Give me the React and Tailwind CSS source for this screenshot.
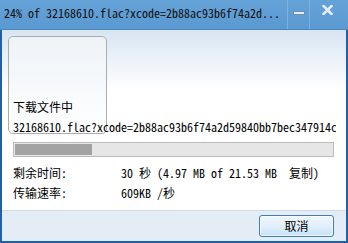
export default function App() {
  return (
    <div className="w-[348px] h-[243px] flex flex-col bg-[#1f60a8] font-['Noto_Sans_Mono_CJK_SC','Noto_Sans_CJK_SC',monospace] text-[12px] leading-[12px] text-black overflow-hidden">
      {/* Title bar */}
      <div className="h-[30px] shrink-0 flex items-stretch bg-[linear-gradient(to_bottom,#65a2d8,#5a99d1)] border-b border-[#4a86c0]">
        <div className="flex-1 pl-[4px] pt-[7px] whitespace-nowrap overflow-hidden text-[#111]">
          24% of 32168610.flac?xcode=2b88ac93b6f74a2d...
        </div>
        <div className="w-[22px] border-l border-[#7fb1de] flex justify-center pt-[11px]">
          <svg width="12" height="4" viewBox="0 0 12 4">
            <rect x="0.5" y="0.5" width="11" height="3" fill="#e4ecf4" stroke="#6f8fb0" strokeWidth="1" />
          </svg>
        </div>
        <div className="w-[36px] border-l border-[#7fb1de] flex justify-center pt-[5px]">
          <svg width="11" height="10" viewBox="0 0 11 10">
            <path d="M1.5 1 L9.5 9 M9.5 1 L1.5 9" stroke="#e6edf4" strokeWidth="2.6" strokeLinecap="square" />
          </svg>
        </div>
        <div className="w-[3px]" />
      </div>

      {/* Body */}
      <div className="flex-1 flex flex-col mx-[2px] mb-[2px]">
        <div className="flex-1 bg-[linear-gradient(to_bottom,#d8e5f2_0px,#ffffff_60px)] pl-[6px] pt-[6px]">
          {/* Thumbnail box */}
          <div className="w-[99px] h-[98px] rounded-[5px] border border-[#acacac] bg-[linear-gradient(to_bottom,#eef3f8,#ffffff)] flex flex-col justify-end pl-[4px]">
            <div className="mb-[8px] whitespace-nowrap">下载文件中</div>
            <div className="w-[323px] shrink-0 whitespace-nowrap overflow-hidden">
              32168610.flac?xcode=2b88ac93b6f74a2d59840bb7bec347914c92a
            </div>
          </div>

          {/* Progress bar */}
          <div className="ml-[5px] mt-[8px] w-[321px] h-[15px] border border-[#bcbcbc] bg-[#e6e6e6] p-[1px]">
            <div className="h-full w-[77px] bg-[#a3a3a3]" />
          </div>

          {/* Info rows */}
          <div className="mt-[6px] ml-[5px] flex flex-col leading-[20px]">
            <div className="flex whitespace-pre">
              <div className="w-[108px]">剩余时间:</div>
              <div>30 秒 (4.97 MB of 21.53 MB  复制)</div>
            </div>
            <div className="flex whitespace-pre">
              <div className="w-[108px]">传输速率:</div>
              <div>609KB /秒</div>
            </div>
          </div>
        </div>

        {/* Bottom panel */}
        <div className="h-[31px] shrink-0 border-t border-[#ccdaea] bg-[#e4ecf5] flex justify-end items-center pr-[12px]">
          <button className="w-[75px] h-[22px] rounded-[3px] border border-[#3c7fb1] bg-[linear-gradient(to_bottom,#f0f7fd_0%,#e1effb_50%,#c6e2f9_100%)] shadow-[inset_0_0_0_1px_rgba(255,255,255,0.7)] flex items-center justify-center leading-[12px]">
            取消
          </button>
        </div>
      </div>
    </div>
  );
}
